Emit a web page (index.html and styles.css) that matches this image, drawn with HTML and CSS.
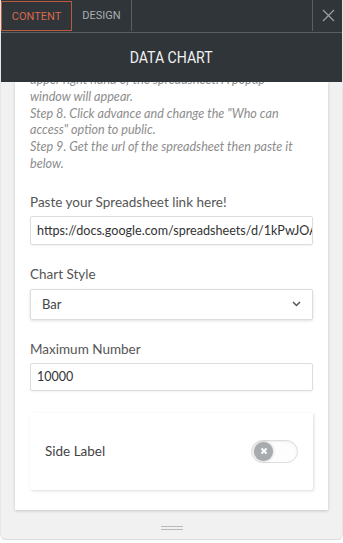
FILE: index.html
```html
<!DOCTYPE html>
<html>
<head>
<meta charset="utf-8">
<link rel="stylesheet" href="styles.css">
</head>
<body>
<div class="panel">
  <div class="tabs">
    <div class="tab tab-active">CONTENT</div>
    <div class="tab tab-design">DESIGN</div>
    <div class="tabs-spacer"></div>
    <div class="close">
      <svg width="13" height="13" viewBox="0 0 13 13"><path d="M1 1 L12 12 M12 1 L1 12" stroke="#9aa0a4" stroke-width="1.2" fill="none"/></svg>
    </div>
  </div>
  <div class="title"><span class="title-text">DATA CHART</span></div>
  <div class="body">
    <div class="card">
      <p class="help">upper right hand of the spreadsheet. A popup<br>window will appear.<br>Step 8. Click advance and change the "Who can<br>access" option to public.<br>Step 9. Get the url of the spreadsheet then paste it<br>below.</p>
      <div class="field field-first">
        <div class="label">Paste your Spreadsheet link here!</div>
        <div class="input input-link">https://docs.google.com/spreadsheets/d/1kPwJOA9xYz</div>
      </div>
      <div class="field">
        <div class="label">Chart Style</div>
        <div class="select">
          <span>Bar</span>
          <svg width="9" height="6" viewBox="0 0 9 6"><path d="M1 1 L4.5 4.5 L8 1" stroke="#555" stroke-width="1.5" fill="none"/></svg>
        </div>
      </div>
      <div class="field">
        <div class="label">Maximum Number</div>
        <div class="input input-num">10000</div>
      </div>
      <div class="side-card">
        <span class="side-label">Side Label</span>
        <div class="toggle"><div class="knob"><svg width="8" height="8" viewBox="0 0 8 8"><path d="M1.5 1.5 L6.5 6.5 M6.5 1.5 L1.5 6.5" stroke="#fff" stroke-width="2" fill="none"/></svg></div></div>
      </div>
    </div>
    <div class="grip-area"><div class="grip"></div></div>
  </div>
</div>
</body>
</html>
```
FILE: styles.css
```css
html, body {
  margin: 0;
  padding: 0;
  background: #ffffff;
}
.panel {
  width: 343px;
  height: 540px;
  box-sizing: border-box;
  display: flex;
  flex-direction: column;
  background: #f1f1f1;
  border-bottom: 1px solid #dcdcdc;
  border-left: 1px solid #e6e6e6;
  border-right: 1px solid #e6e6e6;
  border-radius: 0 0 6px 6px;
  overflow: hidden;
  font-family: Lato, "Open Sans", sans-serif;
}
.tabs {
  height: 31px;
  flex: none;
  display: flex;
  background: #2f3539;
  border-bottom: 1px solid #5a6064;
  padding: 1px 0 0 0;
  box-sizing: content-box;
  margin-left: -1px;
  margin-right: -1px;
}
.tab {
  font-family: Roboto, sans-serif;
  font-size: 11px;
  color: #a9afb3;
  display: flex;
  align-items: center;
  justify-content: center;
  height: 30px;
  box-sizing: border-box;
}
.tab-active {
  width: 71px;
  margin-left: 1px;
  border: 1px solid #b85a3f;
  color: #d9694c;
}
.tab-design {
  width: 60px;
  border-right: 1px solid #5a6064;
  height: 31px;
  margin-top: -1px;
}
.tabs-spacer {
  flex: 1;
}
.close {
  width: 30px;
  height: 31px;
  margin-top: -1px;
  border-left: 1px solid #5a6064;
  display: flex;
  align-items: center;
  justify-content: center;
}
.title {
  height: 49px;
  flex: none;
  background: #2f3539;
  display: flex;
  align-items: center;
  justify-content: center;
  margin-left: -1px;
  margin-right: -1px;
  position: relative;
  z-index: 2;
}
.title-text {
  font-family: Roboto, sans-serif;
  font-size: 16px;
  color: #f2f2f2;
  display: inline-block;
  transform: scaleX(0.88);
}
.body {
  flex: 1;
  overflow: hidden;
  display: flex;
  flex-direction: column;
}
.card {
  margin: 0 14px 0 14px;
  background: #ffffff;
  box-shadow: 0 1px 3px rgba(0,0,0,0.18);
  padding: 0 15px 20px 15px;
}
.help {
  margin: -10px 0 0 0;
  font-style: italic;
  font-size: 12.6px;
  line-height: 16.8px;
  color: #8d8d8d;
  white-space: nowrap;
}
.field {
  margin-top: 20px;
}
.field-first {
  margin-top: 20px;
}
.label {
  font-size: 13.5px;
  line-height: 18px;
  color: #555555;
  margin-bottom: 5px;
}
.input {
  height: 29px;
  box-sizing: border-box;
  border: 1px solid #dddddd;
  border-radius: 2px;
  box-shadow: 0 1px 2px rgba(0,0,0,0.06);
  font-size: 12.6px;
  color: #333333;
  display: flex;
  align-items: center;
  white-space: nowrap;
  overflow: hidden;
}
.input-link {
  padding-left: 6px;
}
.input-num {
  padding-left: 6px;
  height: 28px;
  font-size: 12.5px;
}
.select {
  height: 31px;
  box-sizing: border-box;
  border: 1px solid #dddddd;
  border-radius: 2px;
  box-shadow: 0 1px 3px rgba(0,0,0,0.12);
  display: flex;
  align-items: center;
  justify-content: space-between;
  padding: 0 11px 0 11px;
  font-size: 13px;
  color: #444444;
  margin-top: 6px;
}
.side-card {
  margin-top: 22px;
  height: 77px;
  box-shadow: 1px 1px 3px rgba(0,0,0,0.14);
  border-radius: 2px;
  display: flex;
  align-items: center;
  justify-content: space-between;
  padding: 0 15px 0 15px;
}
.side-label {
  font-size: 13.5px;
  color: #444444;
}
.toggle {
  width: 47px;
  height: 23px;
  box-sizing: border-box;
  border: 1px solid #dddddd;
  border-radius: 12px;
  background: #fdfdfd;
  box-shadow: inset 0 1px 2px rgba(0,0,0,0.06);
  display: flex;
  align-items: center;
  padding-left: 2px;
}
.knob {
  width: 19px;
  height: 19px;
  border-radius: 50%;
  background: #a7abae;
  box-shadow: 0 0 3px rgba(0,0,0,0.25);
  display: flex;
  align-items: center;
  justify-content: center;
}
.grip-area {
  flex: 1;
  display: flex;
  justify-content: center;
  padding-top: 16px;
}
.grip {
  width: 22px;
  height: 2px;
  border-top: 1px solid #b9b9b9;
  border-bottom: 1px solid #b9b9b9;
}
```
